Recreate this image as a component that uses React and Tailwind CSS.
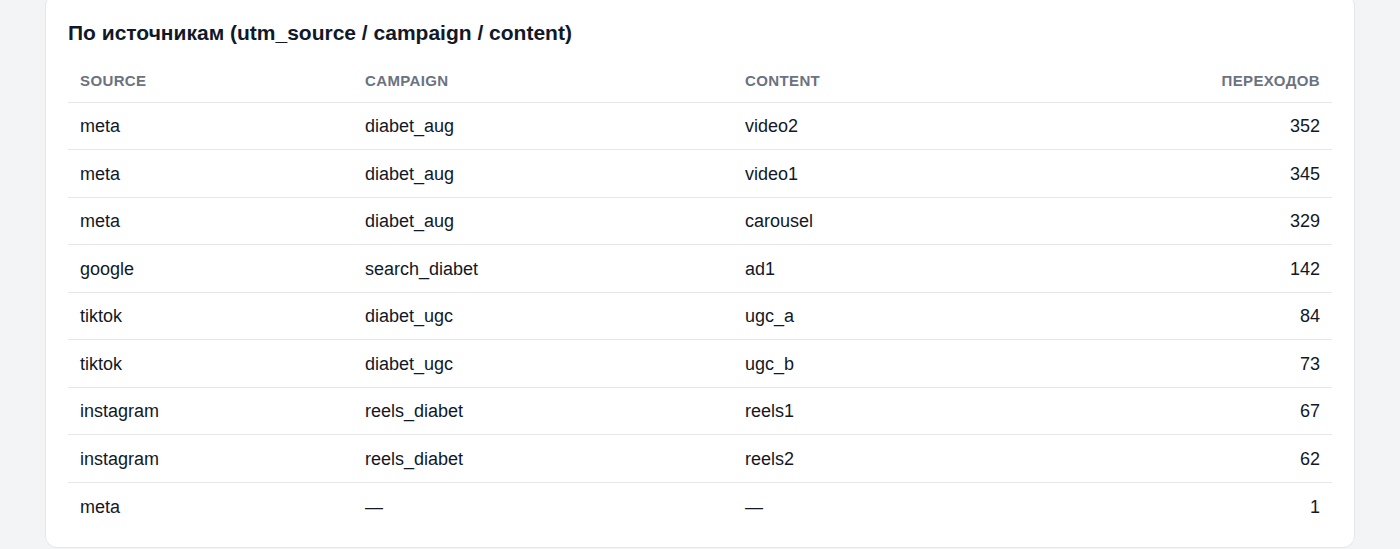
const rows = [
  ["meta", "diabet_aug", "video2", 352],
  ["meta", "diabet_aug", "video1", 345],
  ["meta", "diabet_aug", "carousel", 329],
  ["google", "search_diabet", "ad1", 142],
  ["tiktok", "diabet_ugc", "ugc_a", 84],
  ["tiktok", "diabet_ugc", "ugc_b", 73],
  ["instagram", "reels_diabet", "reels1", 67],
  ["instagram", "reels_diabet", "reels2", 62],
  ["meta", "—", "—", 1],
];

export default function App() {
  return (
    <div
      className="h-[549px] overflow-hidden bg-[#f3f4f6] px-[45px]"
      style={{ fontFamily: '"Liberation Sans", Arial, sans-serif' }}
    >
      <div className="-mt-[6px] h-[554px] rounded-xl border border-[#e5e7eb] bg-white px-[22px] pt-[24px]">
        <h2 className="text-[21px] leading-[28px] font-bold text-[#111827]">
          По источникам (utm_source / campaign / content)
        </h2>

        <table className="mt-[13px] w-full border-collapse text-[18px] text-[#111827]">
          <thead>
            <tr className="border-b border-[#e5e7eb]">
              <th className="w-[285px] px-3 pt-[10px] pb-[9px] text-left text-[15px] font-bold uppercase tracking-wide text-[#6b7280]">
                Source
              </th>
              <th className="w-[380px] px-3 pt-[10px] pb-[9px] text-left text-[15px] font-bold uppercase tracking-wide text-[#6b7280]">
                Campaign
              </th>
              <th className="px-3 pt-[10px] pb-[9px] text-left text-[15px] font-bold uppercase tracking-wide text-[#6b7280]">
                Content
              </th>
              <th className="px-3 pt-[10px] pb-[9px] text-right text-[15px] font-bold uppercase tracking-wide text-[#6b7280]">
                Переходов
              </th>
            </tr>
          </thead>
          <tbody>
            {rows.map((r, i) => (
              <tr key={i} className={i < rows.length - 1 ? "border-b border-[#e5e7eb]" : ""}>
                <td className="h-[47.5px] px-3 pt-[2px]">{r[0]}</td>
                <td className="px-3 pt-[2px]">{r[1]}</td>
                <td className="px-3 pt-[2px]">{r[2]}</td>
                <td className="px-3 pt-[2px] text-right">{r[3]}</td>
              </tr>
            ))}
          </tbody>
        </table>
      </div>
    </div>
  );
}
